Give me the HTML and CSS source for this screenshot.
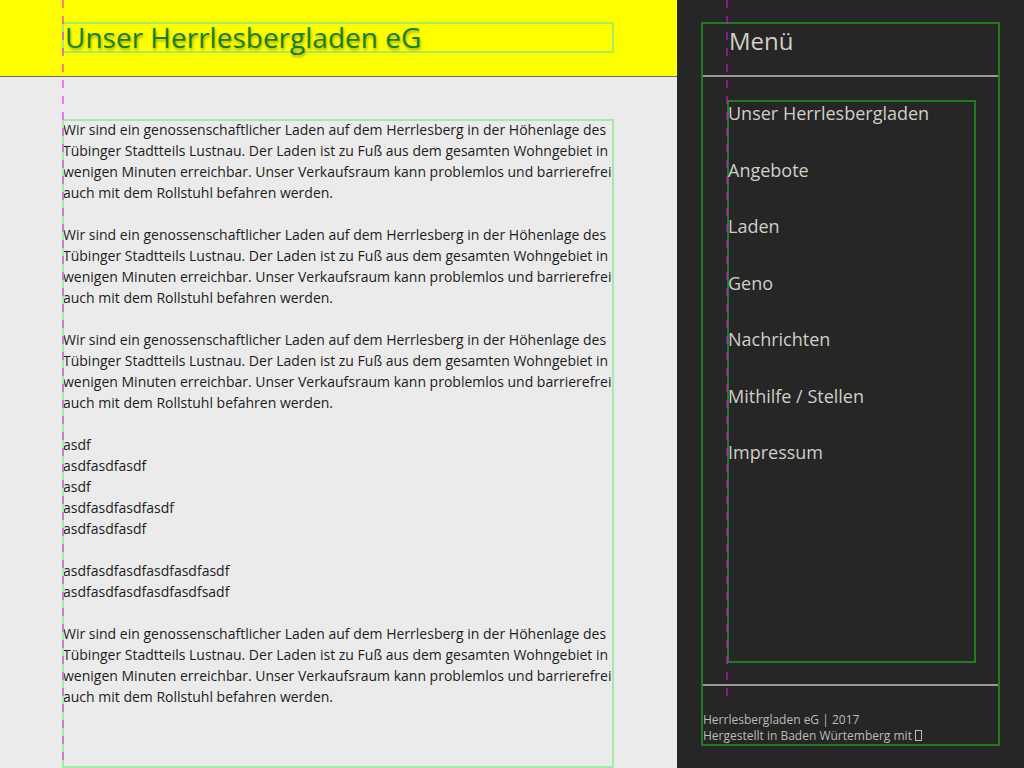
FILE: index.html
```html
<!DOCTYPE html>
<html lang="de">
<head>
<meta charset="utf-8">
<title>Unser Herrlesbergladen eG</title>
<link rel="stylesheet" href="styles.css">
</head>
<body>
<div class="page">
  <div class="main">
    <header class="header">
      <h1 class="title">Unser Herrlesbergladen eG</h1>
    </header>
    <section class="content">
      <p>Wir sind ein genossenschaftlicher Laden auf dem Herrlesberg in der Höhenlage des Tübinger Stadtteils Lustnau. Der Laden ist zu Fuß aus dem gesamten Wohngebiet in wenigen Minuten erreichbar. Unser Verkaufsraum kann problemlos und barrierefrei auch mit dem Rollstuhl befahren werden.</p>
      <p>Wir sind ein genossenschaftlicher Laden auf dem Herrlesberg in der Höhenlage des Tübinger Stadtteils Lustnau. Der Laden ist zu Fuß aus dem gesamten Wohngebiet in wenigen Minuten erreichbar. Unser Verkaufsraum kann problemlos und barrierefrei auch mit dem Rollstuhl befahren werden.</p>
      <p>Wir sind ein genossenschaftlicher Laden auf dem Herrlesberg in der Höhenlage des Tübinger Stadtteils Lustnau. Der Laden ist zu Fuß aus dem gesamten Wohngebiet in wenigen Minuten erreichbar. Unser Verkaufsraum kann problemlos und barrierefrei auch mit dem Rollstuhl befahren werden.</p>
      <p>asdf<br>asdfasdfasdf<br>asdf<br>asdfasdfasdfasdf<br>asdfasdfasdf</p>
      <p>asdfasdfasdfasdfasdfasdf<br>asdfasdfasdfasdfasdfsadf</p>
      <p>Wir sind ein genossenschaftlicher Laden auf dem Herrlesberg in der Höhenlage des Tübinger Stadtteils Lustnau. Der Laden ist zu Fuß aus dem gesamten Wohngebiet in wenigen Minuten erreichbar. Unser Verkaufsraum kann problemlos und barrierefrei auch mit dem Rollstuhl befahren werden.</p>
    </section>
    <div class="guide guide-main"></div>
  </div>
  <aside class="sidebar">
    <div class="side-box">
      <div class="menu-title">Menü</div>
      <hr class="rule">
      <nav class="nav">
        <ul class="nav-list">
          <li>Unser Herrlesbergladen</li>
          <li>Angebote</li>
          <li>Laden</li>
          <li>Geno</li>
          <li>Nachrichten</li>
          <li>Mithilfe / Stellen</li>
          <li>Impressum</li>
        </ul>
      </nav>
      <hr class="rule rule-bottom">
      <footer class="footer">
        <div>Herrlesbergladen eG | 2017</div>
        <div>Hergestellt in Baden Würtemberg mit <span class="tofu"></span></div>
      </footer>
    </div>
    <div class="guide guide-side"></div>
  </aside>
</div>
</body>
</html>
```
FILE: styles.css
```css
html, body {
  margin: 0;
  padding: 0;
  height: 100%;
  overflow: hidden;
}
body {
  font-family: "Open Sans", "DejaVu Sans", sans-serif;
}
.page {
  display: flex;
  height: 100vh;
}
.main {
  position: relative;
  width: 677px;
  flex: none;
  background: #ebebeb;
  display: flex;
  flex-direction: column;
}
.header {
  background: #ffff00;
  border-bottom: 1px solid #6e6e5a;
  padding: 22px 0 0 62px;
  height: 54px;
}
.title {
  margin: 0;
  width: 552px;
  box-sizing: border-box;
  border: 2px solid #a8ec60;
  font-size: 28px;
  font-weight: 400;
  line-height: 27px;
  color: #16801a;
  text-shadow: 1px 2px 3px rgba(0, 0, 0, 0.35);
  padding-left: 1px;
}
.content {
  margin: 42px 0 0 62px;
  width: 552px;
  box-sizing: border-box;
  outline: 2px solid #a6eaa6;
  outline-offset: -2px;
  flex: 1;
  font-size: 14px;
  line-height: 21px;
  color: #1c1c1c;
  padding: 0 0 0 1px;
}
.content p {
  margin: 0 0 21px;
}
.guide {
  position: absolute;
  top: 0;
  width: 2px;
  background: repeating-linear-gradient(to bottom, rgba(255, 0, 255, 0.5) 0 8px, transparent 8px 16px);
  pointer-events: none;
}
.guide-main {
  left: 62px;
  bottom: 0;
}
.guide-side {
  left: 49px;
  height: 696px;
}
.sidebar {
  position: relative;
  flex: 1;
  background: #262626;
  padding: 22px 24px 22px;
  box-sizing: border-box;
  display: flex;
}
.side-box {
  flex: 1;
  border: 2px solid #1f7d1f;
  display: flex;
  flex-direction: column;
}
.menu-title {
  padding: 0 0 0 26px;
  font-size: 24px;
  line-height: 33px;
  color: #cfcfc6;
  margin-bottom: 18px;
}
.rule {
  margin: 0;
  border: 0;
  height: 2px;
  background: #9a9a92;
}
.nav {
  margin: 23px 22px 21px 24px;
  border: 2px solid #1f7d1f;
  flex: 1;
}
.nav-list {
  list-style: none;
  margin: 0;
  padding: 0;
}
.nav-list li {
  font-size: 18px;
  line-height: 25px;
  padding-bottom: 31.5px;
  color: #cfcfc6;
  margin-left: -1px;
}
.nav-list li:first-child {
  margin-top: -1px;
}
.footer {
  margin-top: 26px;
  font-size: 12px;
  line-height: 16px;
  color: #bcbcb4;
}
.tofu {
  display: inline-block;
  width: 5px;
  height: 9px;
  border: 1px solid #bcbcb4;
  vertical-align: -1px;
}
```
